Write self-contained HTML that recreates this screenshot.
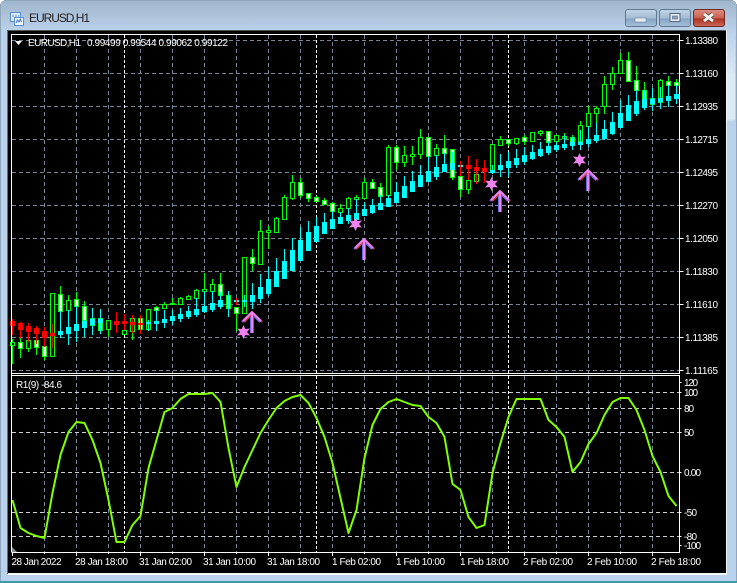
<!DOCTYPE html>
<html><head><meta charset="utf-8"><title>EURUSD,H1</title>
<style>
html,body{margin:0;padding:0;background:#b9d1ea;width:737px;height:583px;overflow:hidden}
svg{position:absolute;left:0;top:0;display:block}
text{font-family:"Liberation Sans",sans-serif;font-size:10px;fill:#fff}
.b rect{width:4px;stroke:#0f0;fill:#000;shape-rendering:crispEdges}
.w rect{width:4px;stroke:#0f0;fill:#fff;shape-rendering:crispEdges}
.c rect{width:5px;fill:#0ff;shape-rendering:crispEdges}
.r rect{width:5px;fill:#f00;shape-rendering:crispEdges}
</style></head><body>
<svg width="737" height="583" viewBox="0 0 737 583" xmlns="http://www.w3.org/2000/svg">
<defs>
<linearGradient id="tb" x1="0" y1="0" x2="0" y2="1"><stop offset="0" stop-color="#9fb5cb"/><stop offset="1" stop-color="#bad1e9"/></linearGradient>
<linearGradient id="bt" x1="0" y1="0" x2="0" y2="1"><stop offset="0" stop-color="#c3d5e7"/><stop offset=".5" stop-color="#a3bcd5"/><stop offset=".55" stop-color="#86a5c4"/><stop offset="1" stop-color="#a5c0da"/></linearGradient>
<linearGradient id="rd" x1="0" y1="0" x2="0" y2="1"><stop offset="0" stop-color="#dc8f84"/><stop offset=".5" stop-color="#c9604f"/><stop offset=".55" stop-color="#ad3222"/><stop offset="1" stop-color="#c9695a"/></linearGradient>
<linearGradient id="sd" x1="0" y1="0" x2="0" y2="1"><stop offset="0" stop-color="#b9d1ea"/><stop offset=".08" stop-color="#dbe8f5"/><stop offset=".16" stop-color="#dbe8f5"/><stop offset=".165" stop-color="#b9d1ea"/><stop offset="1" stop-color="#b9d1ea"/></linearGradient>
<polygon id="st" fill="#ee82ee" points="0,-7 1.800,-3 6.500,-3.500 3.500,0 6.500,3.500 1.800,3 0,7 -1.800,3 -6.500,3.500 -3.500,0 -6.500,-3.500 -1.800,-3"/>
<g id="ar" fill="none" stroke-width="2"><path d="M-1 1V21M-10 10L-1 1L8 10" stroke="#6a6af0"/><path d="M1 1V21M-8 10L1 1L10 10" stroke="#d04040"/><path d="M0 0V21M-9 9L0 0L9 9" stroke="#ee82ee"/></g>
</defs>
<!-- frame -->
<rect width="737" height="583" fill="#b9d1ea"/>
<rect x="0" y="0" width="737" height="31" fill="url(#tb)"/>
<rect x="727" y="31" width="8" height="550" fill="url(#sd)"/>
<rect x="0" y="0" width="1" height="583" fill="#8fa6bc"/>
<rect x="736" y="0" width="1" height="583" fill="#8fa6bc"/>
<rect x="0" y="0" width="737" height="1" fill="#8fa5ba"/>
<rect x="0" y="581" width="737" height="2" fill="#3f9aa8"/>
<path d="M0 0h4v1h-2v1h-1v2h-1zM737 0h-4v1h2v1h1v2h1z" fill="#fff"/>
<!-- icon -->
<rect x="10.500" y="12.500" width="10" height="9" fill="#d8e8fa" stroke="#5b8fd0"/>
<rect x="14.500" y="17.500" width="9" height="8" fill="#eef5fd" stroke="#5b8fd0"/>
<path d="M16 23l1.500-3 1.500 2 1.500-3 1 3" fill="none" stroke="#3f78c0"/>
<path d="M12 16h7" stroke="#5b8fd0" stroke-dasharray="2 1"/>
<text x="29" y="22" style="font-size:12px;fill:#222" textLength="61">EURUSD,H1</text>
<!-- buttons -->
<rect x="625.500" y="9.500" width="31" height="17" rx="2.500" fill="url(#bt)" stroke="#60788f"/>
<rect x="635" y="18" width="11" height="4" fill="#e6edf4" stroke="#6a7f95" stroke-width=".6"/>
<rect x="659.500" y="9.500" width="31" height="17" rx="2.500" fill="url(#bt)" stroke="#60788f"/>
<rect x="670" y="13.500" width="10" height="8" fill="#e6edf4" stroke="#55687c"/><rect x="672.500" y="16" width="5" height="3" fill="#8da5bd" stroke="#55687c" stroke-width=".6"/>
<rect x="693.500" y="9.500" width="31" height="17" rx="2.500" fill="url(#rd)" stroke="#6d2a25"/>
<path d="M704 14l9 7M713 14l-9 7" stroke="#5a4a48" stroke-width="4.500"/><path d="M704 14l9 7M713 14l-9 7" stroke="#f4f0ee" stroke-width="3"/>
<!-- client -->
<rect x="7" y="30" width="720" height="545" fill="#f4f7fa"/>
<rect x="7" y="30" width="1" height="544" fill="#6a6a6a"/>
<rect x="7" y="30" width="719" height="1" fill="#555"/>
<rect x="8" y="31" width="718" height="542" fill="#000"/>
<!-- grid main -->
<g stroke="#778899" fill="none" stroke-dasharray="4 3" shape-rendering="crispEdges">
<path d="M12 40.500H679M12 73.500H679M12 106.500H679M12 139.500H679M12 172.500H679M12 205.500H679M12 238.500H679M12 271.500H679M12 304.500H679M12 337.500H679M12 370.500H679"/>
<path d="M44.500 35V373M76.500 35V373M108.500 35V373M140.500 35V373M172.500 35V373M204.500 35V373M236.500 35V373M268.500 35V373M300.500 35V373M332.500 35V373M364.500 35V373M396.500 35V373M428.500 35V373M460.500 35V373M492.500 35V373M524.500 35V373M556.500 35V373M588.500 35V373M620.500 35V373M652.500 35V373"/>
<path d="M44.500 376V552M76.500 376V552M108.500 376V552M140.500 376V552M172.500 376V552M204.500 376V552M236.500 376V552M268.500 376V552M300.500 376V552M332.500 376V552M364.500 376V552M396.500 376V552M428.500 376V552M460.500 376V552M492.500 376V552M524.500 376V552M556.500 376V552M588.500 376V552M620.500 376V552M652.500 376V552"/>
</g>
<g stroke="#ccd0d4" fill="none" stroke-dasharray="4 3" shape-rendering="crispEdges">
<path d="M12 392.500H679M12 408.500H679M12 432.500H679M12 472.500H679M12 512.500H679M12 536.500H679"/>
</g>
<g stroke="#fff" fill="none" stroke-dasharray="3 2" shape-rendering="crispEdges">
<path d="M124.500 35V373M316.500 35V373M508.500 35V373M124.500 376V552M316.500 376V552M508.500 376V552"/>
</g>
<!-- green wicks -->
<path fill="none" stroke="#0f0" shape-rendering="crispEdges" d="M12.500 339V364M20.500 338V358M28.500 338V352M36.500 338V355M44.500 346V360M60.500 286V311M68.500 295V310M76.500 292V306M84.500 301V320M92.500 315V325M100.500 318V330M108.500 320V337M124.500 330V334M132.500 318V340M140.500 318V329M148.500 309V329M156.500 306V310M164.500 302V308M172.500 298V305M180.500 297V305M188.500 295V300M196.500 289V298M204.500 273V308M212.500 279V291M220.500 273V295M228.500 291V317M236.500 307V331M252.500 249V271M260.500 220V264M268.500 226V249M276.500 217V233M284.500 195V220M292.500 175V200M300.500 178V198M308.500 193V202M316.500 196V201M324.500 198V204M332.500 202V211M340.500 204V212M348.500 197V208M356.500 195V208M364.500 178V198M372.500 179V188M380.500 183V196M388.500 145V195M396.500 145V170M404.500 146V167M412.500 146V165M420.500 129V159M436.500 144V155M444.500 135V163M452.500 149V180M460.500 176V197M468.500 180V194M476.500 174V181M500.500 136V145M508.500 139V146M516.500 138V145M524.500 135V145M532.500 132V141M540.500 130V136M556.500 135V141M564.500 133V146M572.500 135V144M580.500 121V141M588.500 106V129M596.500 106V142M604.500 76V114M612.500 67V90M620.500 53V73M628.500 52V81M636.500 66V90M644.500 82V99M652.500 88V104M660.500 79V102M668.500 76V85M676.500 79V85"/>
<!-- hollow -->
<g class="b">
<rect x="10.500" y="342.500" height="3"/><rect x="26.500" y="340.500" height="8"/><rect x="50.500" y="293.500" height="63"/><rect x="66.500" y="300.500" height="10"/><rect x="90.500" y="318.500" height="7"/><rect x="106.500" y="320.500" height="9"/><rect x="122.500" y="330.500" height="4"/><rect x="130.500" y="318.500" height="13"/><rect x="146.500" y="309.500" height="20"/><rect x="162.500" y="304.500" height="4"/><rect x="170.500" y="303.500" height="1"/><rect x="178.500" y="298.500" height="6"/><rect x="186.500" y="296.500" height="3"/><rect x="194.500" y="290.500" height="8"/><rect x="202.500" y="289.500" height="2"/><rect x="210.500" y="284.500" height="7"/><rect x="242.500" y="257.500" height="56"/><rect x="258.500" y="231.500" height="33"/><rect x="266.500" y="230.500" height="2"/><rect x="274.500" y="218.500" height="14"/><rect x="282.500" y="197.500" height="22"/><rect x="290.500" y="182.500" height="16"/><rect x="338.500" y="208.500" height="4"/><rect x="346.500" y="198.500" height="10"/><rect x="354.500" y="197.500" height="2"/><rect x="362.500" y="182.500" height="16"/><rect x="386.500" y="147.500" height="48"/><rect x="402.500" y="155.500" height="7"/><rect x="410.500" y="154.500" height="2"/><rect x="418.500" y="137.500" height="17"/><rect x="434.500" y="148.500" height="7"/><rect x="466.500" y="180.500" height="9"/><rect x="474.500" y="174.500" height="7"/><rect x="490.500" y="144.500" height="26"/><rect x="498.500" y="139.500" height="6"/><rect x="514.500" y="138.500" height="5"/><rect x="530.500" y="132.500" height="9"/><rect x="538.500" y="131.500" height="2"/><rect x="554.500" y="135.500" height="6"/><rect x="562.500" y="136.500" height="2"/><rect x="578.500" y="125.500" height="16"/><rect x="586.500" y="113.500" height="13"/><rect x="594.500" y="108.500" height="5"/><rect x="602.500" y="84.500" height="22"/><rect x="610.500" y="73.500" height="11"/><rect x="618.500" y="60.500" height="13"/><rect x="650.500" y="98.500" height="6"/><rect x="658.500" y="80.500" height="22"/>
</g>
<!-- white filled -->
<g class="w">
<rect x="18.500" y="342.500" height="6"/><rect x="34.500" y="340.500" height="7"/><rect x="42.500" y="346.500" height="10"/><rect x="58.500" y="294.500" height="17"/><rect x="74.500" y="299.500" height="7"/><rect x="82.500" y="306.500" height="14"/><rect x="98.500" y="318.500" height="12"/><rect x="138.500" y="318.500" height="11"/><rect x="154.500" y="307.500" height="3"/><rect x="218.500" y="284.500" height="11"/><rect x="226.500" y="295.500" height="13"/><rect x="234.500" y="307.500" height="6"/><rect x="250.500" y="257.500" height="6"/><rect x="298.500" y="182.500" height="13"/><rect x="306.500" y="193.500" height="5"/><rect x="314.500" y="197.500" height="4"/><rect x="322.500" y="200.500" height="4"/><rect x="330.500" y="203.500" height="8"/><rect x="370.500" y="182.500" height="6"/><rect x="378.500" y="187.500" height="9"/><rect x="394.500" y="147.500" height="15"/><rect x="426.500" y="137.500" height="19"/><rect x="442.500" y="148.500" height="5"/><rect x="450.500" y="149.500" height="28"/><rect x="458.500" y="176.500" height="13"/><rect x="506.500" y="139.500" height="4"/><rect x="522.500" y="137.500" height="4"/><rect x="546.500" y="131.500" height="11"/><rect x="570.500" y="137.500" height="7"/><rect x="626.500" y="60.500" height="21"/><rect x="634.500" y="80.500" height="10"/><rect x="642.500" y="90.500" height="9"/><rect x="666.500" y="81.500" height="4"/><rect x="674.500" y="82.500" height="3"/>
</g>
<!-- cyan -->
<path fill="none" stroke="#0ff" shape-rendering="crispEdges" d="M60.500 311V338M68.500 310V345M76.500 306V342M84.500 320V337M92.500 308V335M100.500 309V334M148.500 320V331M156.500 310V331M164.500 310V328M172.500 310V325M180.500 308V322M188.500 306V319M196.500 298V317M204.500 291V313M212.500 291V312M220.500 292V309M228.500 291V317M244.500 295V307M252.500 283V309M260.500 274V303M268.500 267V296M276.500 258V287M284.500 249V279M292.500 238V271M300.500 227V261M308.500 221V251M316.500 217V242M324.500 213V234M332.500 211V229M340.500 212V224M348.500 208V224M356.500 199V222M364.500 202V216M372.500 199V214M380.500 195V210M388.500 195V207M396.500 182V203M404.500 176V198M412.500 171V192M420.500 165V187M428.500 156V182M436.500 155V180M444.500 153V172M452.500 152V170M492.500 165V174M500.500 154V177M508.500 152V177M516.500 149V168M524.500 147V165M532.500 145V160M540.500 142V157M548.500 141V155M556.500 142V152M564.500 135V150M572.500 137V150M580.500 130V150M588.500 126V147M596.500 123V143M604.500 120V140M612.500 112V135M620.500 100V128M628.500 95V121M636.500 90V116M644.500 90V110M652.500 88V111M660.500 87V109M668.500 85V107M676.500 85V104"/>
<g class="c">
<rect x="58" y="331" height="4"/><rect x="66" y="327" height="7"/><rect x="74" y="324" height="7"/><rect x="82" y="321" height="7"/><rect x="90" y="319" height="6"/><rect x="98" y="319" height="4"/><rect x="146" y="322" height="2"/><rect x="154" y="321" height="3"/><rect x="162" y="319" height="4"/><rect x="170" y="316" height="5"/><rect x="178" y="314" height="5"/><rect x="186" y="311" height="6"/><rect x="194" y="309" height="6"/><rect x="202" y="306" height="6"/><rect x="210" y="303" height="7"/><rect x="218" y="300" height="7"/><rect x="234" y="300" height="2"/><rect x="242" y="300" height="2"/><rect x="250" y="295" height="7"/><rect x="258" y="287" height="12"/><rect x="266" y="279" height="15"/><rect x="274" y="271" height="16"/><rect x="282" y="261" height="18"/><rect x="290" y="250" height="21"/><rect x="298" y="240" height="21"/><rect x="306" y="232" height="19"/><rect x="314" y="226" height="16"/><rect x="322" y="222" height="12"/><rect x="330" y="219" height="10"/><rect x="338" y="217" height="7"/><rect x="346" y="215" height="6"/><rect x="354" y="213" height="7"/><rect x="362" y="209" height="7"/><rect x="370" y="205" height="8"/><rect x="378" y="203" height="7"/><rect x="386" y="198" height="9"/><rect x="394" y="192" height="11"/><rect x="402" y="186" height="12"/><rect x="410" y="181" height="11"/><rect x="418" y="175" height="12"/><rect x="426" y="171" height="11"/><rect x="434" y="167" height="10"/><rect x="442" y="164" height="8"/><rect x="450" y="163" height="7"/><rect x="458" y="165" height="2"/><rect x="490" y="170" height="3"/><rect x="498" y="165" height="5"/><rect x="506" y="161" height="7"/><rect x="514" y="158" height="7"/><rect x="522" y="155" height="7"/><rect x="530" y="152" height="7"/><rect x="538" y="149" height="7"/><rect x="546" y="146" height="7"/><rect x="554" y="145" height="5"/><rect x="562" y="144" height="4"/><rect x="570" y="142" height="4"/><rect x="578" y="142" height="3"/><rect x="586" y="139" height="5"/><rect x="594" y="135" height="6"/><rect x="602" y="129" height="10"/><rect x="610" y="122" height="12"/><rect x="618" y="113" height="15"/><rect x="626" y="105" height="16"/><rect x="634" y="101" height="13"/><rect x="642" y="99" height="9"/><rect x="650" y="99" height="5"/><rect x="658" y="98" height="4"/><rect x="666" y="96" height="5"/><rect x="674" y="94" height="5"/>
</g>
<!-- red -->
<path fill="none" stroke="#f00" shape-rendering="crispEdges" d="M12.500 319V335M20.500 322V338M28.500 323V342M36.500 326V344M44.500 327V347M52.500 324V348M116.500 312V333M124.500 314V330M132.500 315V333M140.500 315V334M236.500 298V305M460.500 161V176M468.500 156V180M476.500 159V184M484.500 160V183"/>
<g class="r">
<rect x="10" y="321" height="5"/><rect x="18" y="323" height="7"/><rect x="26" y="326" height="6"/><rect x="34" y="328" height="6"/><rect x="42" y="331" height="7"/><rect x="50" y="333" height="3"/><rect x="114" y="321" height="4"/><rect x="122" y="321" height="3"/><rect x="130" y="322" height="3"/><rect x="138" y="323" height="2"/><rect x="466" y="165" height="4"/><rect x="474" y="167" height="4"/><rect x="482" y="168" height="4"/>
</g>
<!-- markers -->
<use href="#st" x="243.500" y="332"/><use href="#st" x="355.500" y="224"/><use href="#st" x="491.500" y="184"/><use href="#st" x="579.500" y="160"/>
<use href="#ar" x="252" y="312"/><use href="#ar" x="364" y="239"/><use href="#ar" x="500" y="191"/><use href="#ar" x="588" y="170"/>
<!-- RSI -->
<polyline fill="none" stroke="#7fff00" stroke-width="2" stroke-linejoin="round" points="12.500,500 20.500,528 28.500,533 36.500,536 44.500,538 52.500,493 60.500,455 68.500,432 76.500,422 84.500,423 92.500,440 100.500,463 108.500,500 116.500,542 124.500,542 132.500,525 140.500,516 148.500,468 156.500,440 164.500,412 172.500,408 180.500,399 188.500,394 196.500,394 204.500,394 212.500,393 220.500,402 228.500,448 236.500,487 244.500,467 252.500,450 260.500,433 268.500,420 276.500,408 284.500,401 292.500,397 300.500,395 308.500,403 316.500,418 324.500,437 332.500,463 340.500,498 348.500,533 356.500,510 364.500,458 372.500,425 380.500,409 388.500,402 396.500,399 404.500,402 412.500,405 420.500,406 428.500,417 436.500,423 444.500,437 452.500,484 460.500,490 468.500,517 476.500,528 484.500,525 492.500,473 500.500,443 508.500,417 516.500,399 524.500,399 532.500,399 540.500,399 548.500,420 556.500,427 564.500,437 572.500,472 580.500,462 588.500,444 596.500,433 604.500,415 612.500,402 620.500,398 628.500,398 636.500,410 644.500,430 652.500,456 660.500,472 668.500,496 676.500,506"/>
<!-- frames -->
<g fill="none" stroke="#fff" shape-rendering="crispEdges">
<path d="M11.500 552V34.500H679.500V373.500H11.500M11.500 375.500H679.500V552.500H11.500"/>
<path d="M679.500 40.500h4M679.500 73.500h4M679.500 106.500h4M679.500 139.500h4M679.500 172.500h4M679.500 205.500h4M679.500 238.500h4M679.500 271.500h4M679.500 304.500h4M679.500 337.500h4M679.500 370.500h4M679.500 382.500h2M679.500 392.500h2M679.500 408.500h2M679.500 432.500h2M679.500 472.500h2M679.500 512.500h2M679.500 536.500h2M679.500 545.500h2"/>
<path d="M12.500 552V556M44.500 552V554M76.500 552V556M108.500 552V554M140.500 552V556M172.500 552V554M204.500 552V556M236.500 552V554M268.500 552V556M300.500 552V554M332.500 552V556M364.500 552V554M396.500 552V556M428.500 552V554M460.500 552V556M492.500 552V554M524.500 552V556M556.500 552V554M588.500 552V556M620.500 552V554M652.500 552V556"/>
</g>
<polygon points="12,547 17,552 12,552" fill="#8a8f96"/>
<polygon points="15,41 22,41 18.500,45" fill="#fff"/>
<text x="28" y="46" textLength="53">EURUSD,H1</text>
<text x="87" y="46" textLength="141">0.99499 0.99544 0.99062 0.99122</text>
<text x="16" y="388" textLength="46">R1(9) -84.6</text>
<!-- price axis -->
<text x="685" y="44" textLength="33">1.13380</text>
<text x="685" y="77" textLength="33">1.13160</text>
<text x="685" y="110" textLength="33">1.12935</text>
<text x="685" y="143" textLength="33">1.12715</text>
<text x="685" y="176" textLength="33">1.12495</text>
<text x="685" y="209" textLength="33">1.12270</text>
<text x="685" y="242" textLength="33">1.12050</text>
<text x="685" y="275" textLength="33">1.11830</text>
<text x="685" y="308" textLength="33">1.11610</text>
<text x="685" y="341" textLength="33">1.11385</text>
<text x="685" y="374" textLength="33">1.11165</text>
<text x="684" y="386" textLength="14">120</text>
<text x="684" y="396" textLength="14">100</text>
<text x="684" y="412" textLength="10">80</text>
<text x="684" y="436" textLength="10">50</text>
<text x="684" y="476" textLength="17">0.00</text>
<text x="684" y="516" textLength="13">-50</text>
<text x="684" y="540" textLength="13">-80</text>
<text x="684" y="549" textLength="17">-100</text>
<!-- time axis -->
<text x="11.500" y="565" textLength="50">28 Jan 2022</text>
<text x="75" y="565" textLength="53">28 Jan 18:00</text>
<text x="139" y="565" textLength="53">31 Jan 02:00</text>
<text x="203" y="565" textLength="53">31 Jan 10:00</text>
<text x="267" y="565" textLength="53">31 Jan 18:00</text>
<text x="332" y="565" textLength="49">1 Feb 02:00</text>
<text x="396" y="565" textLength="49">1 Feb 10:00</text>
<text x="460" y="565" textLength="49">1 Feb 18:00</text>
<text x="523" y="565" textLength="50">2 Feb 02:00</text>
<text x="587" y="565" textLength="50">2 Feb 10:00</text>
<text x="651" y="565" textLength="50">2 Feb 18:00</text>
</svg>
</body></html>
